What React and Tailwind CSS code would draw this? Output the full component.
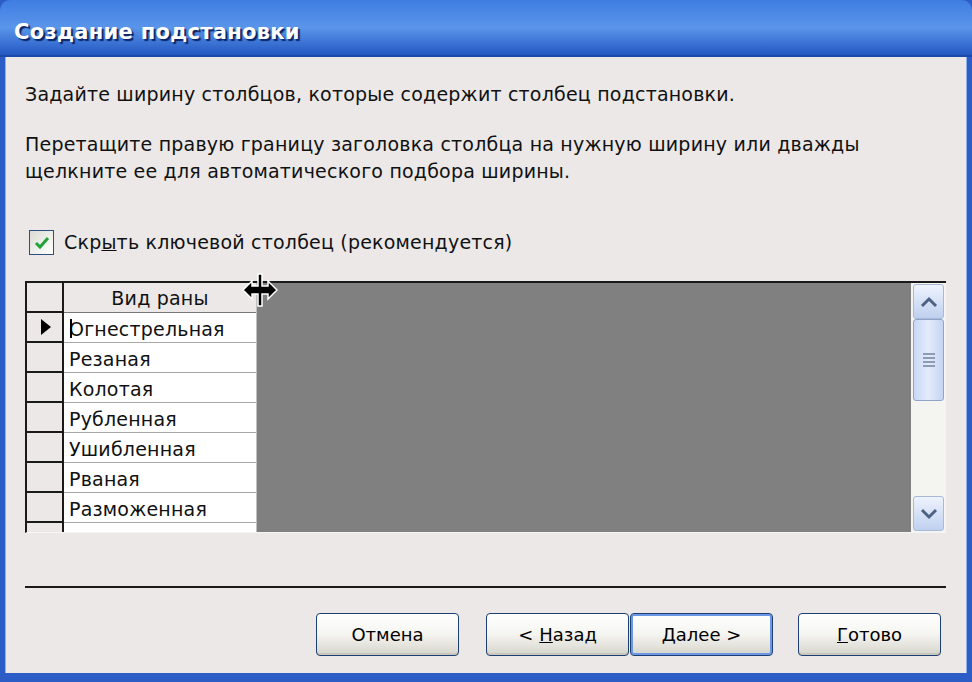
import React from "react";

const rows = [
  "Огнестрельная",
  "Резаная",
  "Колотая",
  "Рубленная",
  "Ушибленная",
  "Рваная",
  "Разможенная",
];

function XpButton({ children, focused }) {
  return (
    <button
      type="button"
      className={
        "w-[143px] h-[43px] rounded-[4px] border border-[#1c3f74] bg-gradient-to-b from-[#ffffff] via-[#f4f4f0] to-[#d6d4cc] text-[18px] text-black flex items-center justify-center " +
        (focused ? "shadow-[inset_0_0_0_2px_#6d97e4]" : "shadow-[inset_0_-2px_0_#c9c6bc]")
      }
    >
      {children}
    </button>
  );
}

function ScrollArrow({ up }) {
  return (
    <div className="h-[35px] mx-[2px] rounded-[3px] border border-[#a9b9d8] bg-gradient-to-b from-[#eef3fd] to-[#bfd0ef] flex items-center justify-center">
      <svg width="18" height="12" viewBox="0 0 18 12">
        <path
          d={up ? "M2 10 L9 3 L16 10" : "M2 2 L9 9 L16 2"}
          fill="none"
          stroke="#4d6185"
          strokeWidth="3"
        />
      </svg>
    </div>
  );
}

export default function App() {
  return (
    <div
      className="w-[972px] h-[682px] flex flex-col bg-[#2c5cc5] overflow-hidden"
      style={{ fontFamily: '"DejaVu Sans", sans-serif' }}
    >
      {/* title bar */}
      <div className="h-[57px] shrink-0 rounded-t-[10px] bg-gradient-to-b from-[#3f7de2] via-[#5a95ea] to-[#2457c2] border-b-2 border-[#1c48a8] flex items-center pl-[14px] pt-[10px]">
        <span className="text-white font-bold text-[21px] tracking-[0.3px] [text-shadow:2px_2px_1px_#0a2467]">
          Создание подстановки
        </span>
      </div>

      {/* body */}
      <div className="flex-1 flex flex-col mx-[5px] mb-[9px] bg-[#ebe8e7] border-l border-r border-[#8fb2ee] pl-[19px] pr-[20px] pt-[24px] text-[19px] tracking-[0.2px] leading-[27px] text-[#111]">
        <p>Задайте ширину столбцов, которые содержит столбец подстановки.</p>
        <p className="mt-[23px]">
          Перетащите правую границу заголовка столбца на нужную ширину или дважды
          <br />
          щелкните ее для автоматического подбора ширины.
        </p>

        <label className="mt-[44px] flex items-center gap-[10px] pl-[4px]">
          <span className="w-[25px] h-[25px] border border-[#2c4f80] bg-gradient-to-br from-[#dcdcd4] to-white flex items-center justify-center">
            <svg width="16" height="14" viewBox="0 0 16 14">
              <path d="M2 7 L6 11 L14 2" fill="none" stroke="#22a33a" strokeWidth="3" />
            </svg>
          </span>
          <span>
            Скр<span className="underline">ы</span>ть ключевой столбец (рекомендуется)
          </span>
        </label>

        {/* grid */}
        <div className="relative mt-[25px] h-[252px] flex border-t-2 border-l-2 border-[#1a1a1a] border-b border-b-[#f5f5f5]">
          <div className="w-[37px] shrink-0 flex flex-col border-r-2 border-[#1a1a1a] bg-[#ebe8e7] overflow-hidden">
            <div className="h-[30px] shrink-0 border-b-2 border-[#1a1a1a]" />
            {rows.map((r, i) => (
              <div
                key={r}
                className="h-[30px] shrink-0 border-b-2 border-[#1a1a1a] flex items-center pl-[13px]"
              >
                {i === 0 && (
                  <svg width="12" height="16" viewBox="0 0 12 16">
                    <path d="M1 0 L11 8 L1 16 Z" fill="#000" />
                  </svg>
                )}
              </div>
            ))}
            <div className="h-[30px] shrink-0" />
          </div>
          <div className="w-[192px] shrink-0 flex flex-col bg-white overflow-hidden">
            <div className="h-[30px] shrink-0 bg-[#ebe8e7] border-b border-[#777] flex items-center justify-center pt-[2px]">
              Вид раны
            </div>
            {rows.map((r, i) => (
              <div
                key={r}
                className="relative h-[30px] shrink-0 border-b border-[#a8a8a8] flex items-center pl-[5px] pt-[3px]"
              >
                {i === 0 && (
                  <span className="absolute left-[6px] top-[6px] w-[2px] h-[19px] bg-black" />
                )}
                {r}
              </div>
            ))}
            <div className="h-[30px] shrink-0" />
          </div>
          <div className="flex-1 bg-[#808080] border-l border-[#c0c0c0]" />
          <div className="w-[35px] shrink-0 bg-[#f4f4f0] flex flex-col pt-[1px] pb-[1px]">
            <ScrollArrow up />
            <div className="h-[82px] mx-[2px] rounded-[3px] border border-[#8fa4c8] bg-gradient-to-r from-[#c9d8f5] via-[#e3ebfb] to-[#c5d4f2] flex items-center justify-center">
              <div className="flex flex-col gap-[2px]">
                <div className="w-[12px] h-[2px] bg-[#8d9bb5]" />
                <div className="w-[12px] h-[2px] bg-[#8d9bb5]" />
                <div className="w-[12px] h-[2px] bg-[#8d9bb5]" />
                <div className="w-[12px] h-[2px] bg-[#8d9bb5]" />
              </div>
            </div>
            <div className="flex-1" />
            <ScrollArrow />
          </div>

          {/* resize cursor */}
          <svg
            className="absolute left-[215px] top-[-10px]"
            width="36"
            height="34"
            viewBox="0 0 36 34"
          >
            <path
              d="M16 1 H20 V13 H26 V8 L35 17 L26 26 V21 H20 V33 H16 V21 H10 V26 L1 17 L10 8 V13 H16 Z"
              fill="#000"
              stroke="#fff"
              strokeWidth="1.5"
              strokeLinejoin="miter"
            />
          </svg>
        </div>

        <div className="mt-[53px] h-[2px] bg-[#1a1a1a]" />

        <div className="mt-[25px] flex pl-[291px] tracking-normal">
          <XpButton>Отмена</XpButton>
          <div className="ml-[27px] flex gap-[1px]">
            <XpButton>
              &lt; <span className="underline ml-[6px]">Н</span>азад
            </XpButton>
            <XpButton focused>
              <span className="underline">Д</span>алее &gt;
            </XpButton>
          </div>
          <div className="ml-[25px]">
            <XpButton>
              <span className="underline">Г</span>отово
            </XpButton>
          </div>
        </div>
      </div>
    </div>
  );
}
